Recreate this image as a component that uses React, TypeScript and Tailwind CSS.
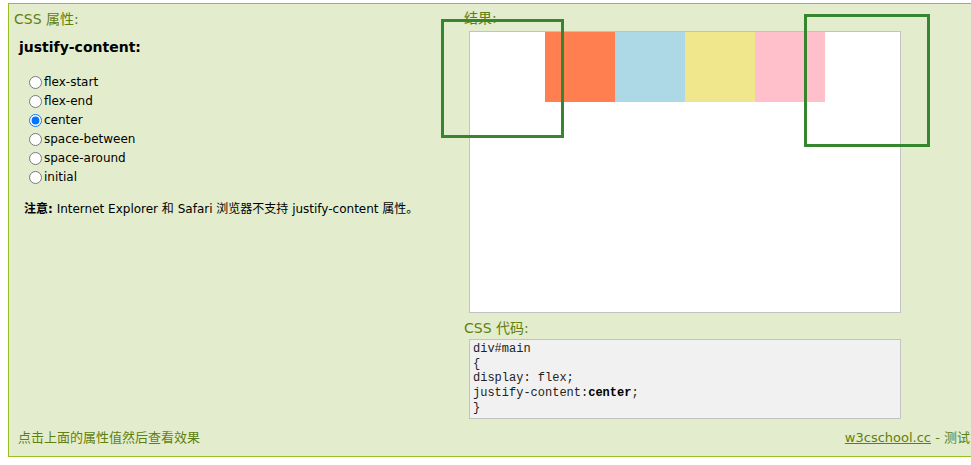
import React from "react";

const options = ["flex-start", "flex-end", "center", "space-between", "space-around", "initial"];

const boxes = ["bg-[#ff7f50]", "bg-[#add8e6]", "bg-[#f0e68c]", "bg-[#ffc0cb]"];

export default function App() {
  return (
    <div
      className="relative h-[465px] w-[971px] overflow-hidden bg-white text-black"
      style={{ fontFamily: '"DejaVu Sans", "Noto Sans CJK SC", sans-serif' }}
    >
      <div className="ml-[8px] mt-[3px] flex h-[454px] w-[1003px] flex-col border border-[#98bf21] bg-[#e3edcd]">
        <div className="flex flex-1">
          {/* left: property picker */}
          <div className="w-[454px] shrink-0">
            <p className="ml-[5px] mt-[6px] text-[14px] leading-[18px] text-[#617f10]">CSS 属性:</p>
            <h3 className="ml-[10px] mt-[10px] text-[14px] font-bold leading-[18px]">justify-content:</h3>
            <ul className="ml-[20px] mt-[17px]">
              {options.map((opt) => (
                <li key={opt} className="flex h-[19px] items-center text-[12px]">
                  <input
                    type="radio"
                    name="jc"
                    value={opt}
                    defaultChecked={opt === "center"}
                    className="m-0 mr-[2px] h-[13px] w-[13px]"
                  />
                  <span className="leading-[19px]">{opt}</span>
                </li>
              ))}
            </ul>
            <p className="ml-[15px] mt-[14px] text-[12px] leading-[16px]">
              <b>注意:</b> Internet Explorer 和 Safari 浏览器不支持 justify-content 属性。
            </p>
          </div>

          {/* right: result + code */}
          <div className="pl-[1px]">
            <p className="mt-[5px] text-[14px] leading-[18px] text-[#617f10]">结果:</p>
            <div className="ml-[5px] mt-[4px] flex h-[282px] w-[432px] justify-center border border-[#c3c3c3] bg-white">
              {boxes.map((c) => (
                <div key={c} className={`h-[70px] w-[70px] ${c}`} />
              ))}
            </div>
            <p className="mt-[6px] text-[14px] leading-[18px] text-[#617f10]">CSS 代码:</p>
            <div
              className="ml-[5px] mt-[2px] h-[80px] w-[432px] border border-[#c3c3c3] bg-[#f1f1f1] pl-[3px] pt-[2px] text-[12px] leading-[14.7px] text-[#222]"
              style={{ fontFamily: '"Liberation Mono", monospace' }}
            >
              <div>div#main</div>
              <div>{"{"}</div>
              <div>display: flex;</div>
              <div>
                justify-content:<b className="text-black">center</b>;
              </div>
              <div>{"}"}</div>
            </div>
          </div>
        </div>

        <div className="flex items-center justify-between pb-[9px] pl-[9px] pr-[40px] text-[13px] leading-[18px] text-[#617f10]">
          <span>点击上面的属性值然后查看效果</span>
          <span className="whitespace-nowrap">
            <a href="#" className="underline">w3cschool.cc</a> - 测试
          </span>
        </div>
      </div>

      {/* annotation frames */}
      <div className="absolute left-[441px] top-[19px] h-[119px] w-[123px] border-[3px] border-[#35862f]" />
      <div className="absolute left-[804px] top-[14px] h-[133px] w-[126px] border-[3px] border-[#35862f]" />
    </div>
  );
}
